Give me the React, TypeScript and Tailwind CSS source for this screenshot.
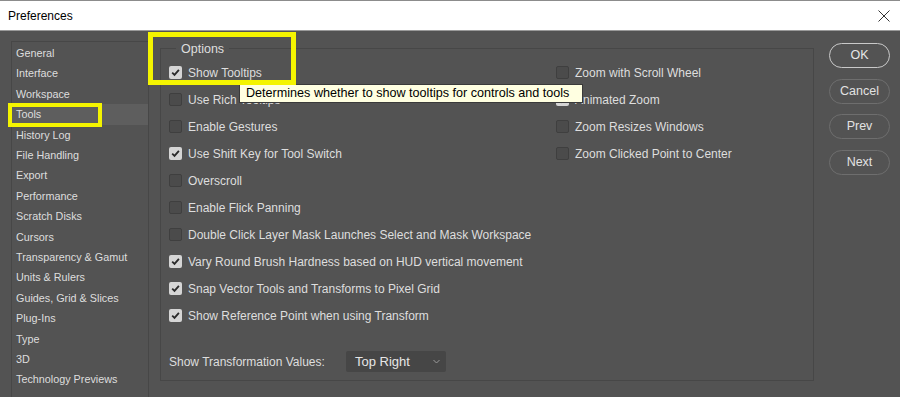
import React from "react";

const sidebarItems = [
  "General",
  "Interface",
  "Workspace",
  "Tools",
  "History Log",
  "File Handling",
  "Export",
  "Performance",
  "Scratch Disks",
  "Cursors",
  "Transparency & Gamut",
  "Units & Rulers",
  "Guides, Grid & Slices",
  "Plug-Ins",
  "Type",
  "3D",
  "Technology Previews",
];

const leftOptions: [string, boolean][] = [
  ["Show Tooltips", true],
  ["Use Rich Tooltips", false],
  ["Enable Gestures", false],
  ["Use Shift Key for Tool Switch", true],
  ["Overscroll", false],
  ["Enable Flick Panning", false],
  ["Double Click Layer Mask Launches Select and Mask Workspace", false],
  ["Vary Round Brush Hardness based on HUD vertical movement", true],
  ["Snap Vector Tools and Transforms to Pixel Grid", true],
  ["Show Reference Point when using Transform", true],
];

const rightOptions: [string, boolean][] = [
  ["Zoom with Scroll Wheel", false],
  ["Animated Zoom", true],
  ["Zoom Resizes Windows", false],
  ["Zoom Clicked Point to Center", false],
];

function Check({ checked }: { checked: boolean }) {
  return (
    <span
      className={
        checked
          ? "flex h-[13px] w-[13px] shrink-0 items-center justify-center rounded-[2px] bg-[#d5d5d5]"
          : "flex h-[13px] w-[13px] shrink-0 items-center justify-center rounded-[2px] border border-[#3f3f3f] bg-[#4b4b4b]"
      }
    >
      {checked && (
        <svg width="9" height="9" viewBox="0 0 9 9">
          <path d="M1.2 4.6 L3.5 6.9 L7.9 1.8" fill="none" stroke="#2a2a2a" strokeWidth="1.8" />
        </svg>
      )}
    </span>
  );
}

function Row({ label, checked }: { label: string; checked: boolean }) {
  return (
    <div className="flex h-[27px] items-center gap-[6px] whitespace-nowrap">
      <Check checked={checked} />
      <span>{label}</span>
    </div>
  );
}

function Btn({ label, primary }: { label: string; primary?: boolean }) {
  return (
    <button
      className={
        primary
          ? "flex h-[25px] w-[61px] shrink-0 items-center justify-center rounded-full border-[1.5px] border-[#c9c9c9] text-[12.5px] text-[#e6e6e6]"
          : "flex h-[25px] w-[61px] shrink-0 items-center justify-center rounded-full border border-[#6e6e6e] text-[12.5px] text-[#e2e2e2]"
      }
    >
      {label}
    </button>
  );
}

export default function App() {
  return (
    <div
      className="relative flex h-[397px] w-[900px] flex-col overflow-hidden bg-[#535353]"
      style={{ fontFamily: '"Liberation Sans", Arial, sans-serif' }}
    >
      {/* Title bar */}
      <div className="flex h-[31px] shrink-0 items-center justify-between border-t border-b border-t-[#8c8c8c] border-b-[#9a9a9a] bg-white pl-[8px] pr-[10px]">
        <span className="text-[12px] text-black">Preferences</span>
        <svg width="12" height="12" viewBox="0 0 12 12">
          <path d="M0.5 0.5 L11.5 11.5 M11.5 0.5 L0.5 11.5" stroke="#333" strokeWidth="1" />
        </svg>
      </div>

      {/* Body */}
      <div className="flex flex-1 text-[12px] text-[#dedede]">
        {/* Sidebar */}
        <div className="ml-[11px] mt-[10px] w-[138px] border border-b-0 border-[#474747] pt-[1px]">
          {sidebarItems.map((it) => (
            <div
              key={it}
              className={
                it === "Tools"
                  ? "flex h-[20.4px] items-center bg-[#5e5e5e] pl-[4px] text-[10.8px] whitespace-nowrap"
                  : "flex h-[20.4px] items-center pl-[4px] text-[10.8px] whitespace-nowrap"
              }
            >
              {it}
            </div>
          ))}
        </div>

        {/* Options group */}
        <div className="relative ml-[11px] mt-[17px] h-[333px] w-[654px] border border-[#474747] pl-[8px] pt-[10px]">
          <span className="absolute left-[15px] top-[-8px] bg-[#535353] px-[5px] text-[12.5px] leading-[16px]">Options</span>
          <div className="flex">
            <div className="flex w-[387px] flex-col">
              {leftOptions.map(([l, c]) => (
                <Row key={l} label={l} checked={c} />
              ))}
            </div>
            <div className="flex flex-col">
              {rightOptions.map(([l, c]) => (
                <Row key={l} label={l} checked={c} />
              ))}
            </div>
          </div>
          <div className="mt-[22px] flex h-[21px] items-center">
            <span className="w-[177px]">Show Transformation Values:</span>
            <div className="flex h-[21px] w-[100px] items-center justify-between rounded-[2px] bg-[#464646] pl-[9px] pr-[6px] text-[#e6e6e6]">
              <span className="text-[13px]">Top Right</span>
              <svg width="7" height="5" viewBox="0 0 7 5">
                <path d="M0.5 1 L3.5 4 L6.5 1" fill="none" stroke="#9a9a9a" strokeWidth="1" />
              </svg>
            </div>
          </div>
        </div>

        {/* Buttons */}
        <div className="ml-[15px] mt-[12px] flex flex-col gap-[10.5px]">
          <Btn label="OK" primary />
          <Btn label="Cancel" />
          <Btn label="Prev" />
          <Btn label="Next" />
        </div>
      </div>

      {/* Tooltip overlay */}
      <div className="absolute left-[239px] top-[84px] flex h-[19px] w-[344px] items-center border border-[#3a3a3a] bg-[#ffffe1] pl-[6px] text-[12.6px] text-black whitespace-nowrap">
        Determines whether to show tooltips for controls and tools
      </div>

      {/* Yellow annotation boxes */}
      <div className="pointer-events-none absolute left-[148px] top-[32px] h-[53px] w-[148px] border-[5px] border-[#f4f400]" />
      <div className="pointer-events-none absolute left-[8px] top-[103px] h-[24px] w-[94px] border-[4px] border-[#f4f400]" />
    </div>
  );
}
